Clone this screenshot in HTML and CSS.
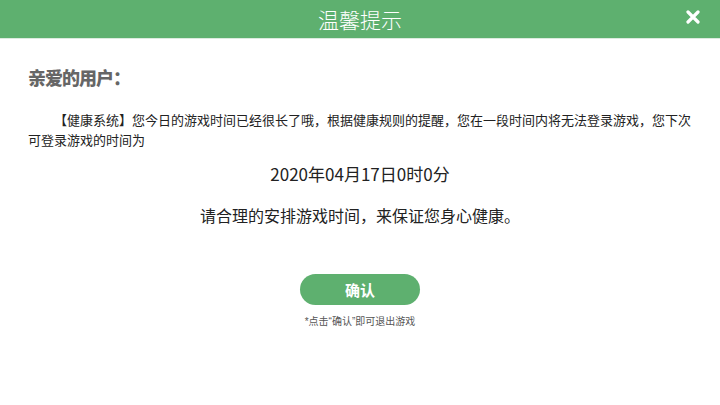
FILE: index.html
```html
<!DOCTYPE html>
<html lang="zh-CN">
<head>
<meta charset="utf-8">
<title>温馨提示</title>
<link rel="stylesheet" href="styles.css">
</head>
<body>
<div class="dialog">
  <header class="bar">
    <h1 class="bar-title">温馨提示</h1>
    <button class="close" aria-label="关闭">
      <svg viewBox="0 0 14 14" width="14" height="14"><path d="M2 2L12 12M12 2L2 12" stroke="#fff" stroke-width="3.2" stroke-linecap="round"/></svg>
    </button>
  </header>
  <main class="content">
    <h2 class="greet">亲爱的用户：</h2>
    <p class="msg">【健康系统】您今日的游戏时间已经很长了哦，根据健康规则的提醒，您在一段时间内将无法登录游戏，您下次可登录游戏的时间为</p>
    <p class="date">2020年04月17日0时0分</p>
    <p class="advice">请合理的安排游戏时间，来保证您身心健康。</p>
    <button class="ok">确认</button>
    <p class="hint">*点击“确认”即可退出游戏</p>
  </main>
</div>
</body>
</html>
```
FILE: styles.css
```css
* { box-sizing: border-box; }
html, body { margin: 0; padding: 0; background: #fff; }
body {
  width: 720px;
  height: 405px;
  overflow: hidden;
  font-family: "Noto Sans CJK SC", "Noto Sans", sans-serif;
  color: #222;
}
.dialog { display: flex; flex-direction: column; height: 100%; }
.bar {
  position: relative;
  height: 39px;
  background: #5eb06f;
  border-bottom: 1px solid #dcebdf;
  display: flex;
  align-items: center;
  justify-content: center;
}
.bar-title {
  margin: 0;
  font-size: 21px;
  font-weight: 300;
  color: #fff;
  line-height: 26px;
  letter-spacing: 0;
}
.close {
  position: absolute;
  right: 19px;
  top: 9px;
  width: 16px;
  height: 16px;
  padding: 0;
  border: 0;
  background: none;
  display: flex;
  align-items: center;
  justify-content: center;
}
.content {
  padding: 0 28px;
  display: flex;
  flex-direction: column;
  align-items: center;
}
.greet {
  align-self: stretch;
  margin: 26px 0 0;
  font-size: 18px;
  line-height: 24px;
  font-weight: 900;
  color: #666;
  letter-spacing: -1px;
}
.msg {
  align-self: stretch;
  margin: 21px 0 0;
  font-size: 13px;
  line-height: 20px;
  text-indent: 2em;
  color: #222;
}
.date {
  margin: 12px 0 0;
  font-size: 17px;
  line-height: 24px;
  color: #222;
}
.advice {
  margin: 17px 0 0;
  font-size: 16px;
  line-height: 24px;
  color: #222;
}
.ok {
  margin-top: 47px;
  width: 120px;
  height: 31px;
  border: 0;
  border-radius: 16px;
  background: #5eb06f;
  color: #fff;
  font-family: inherit;
  font-size: 15px;
  font-weight: 700;
  padding: 0;
}
.hint {
  margin: 10px 0 0;
  font-family: "Liberation Sans", "Noto Sans CJK SC", sans-serif;
  font-size: 10px;
  line-height: 14px;
  color: #555;
}
```
